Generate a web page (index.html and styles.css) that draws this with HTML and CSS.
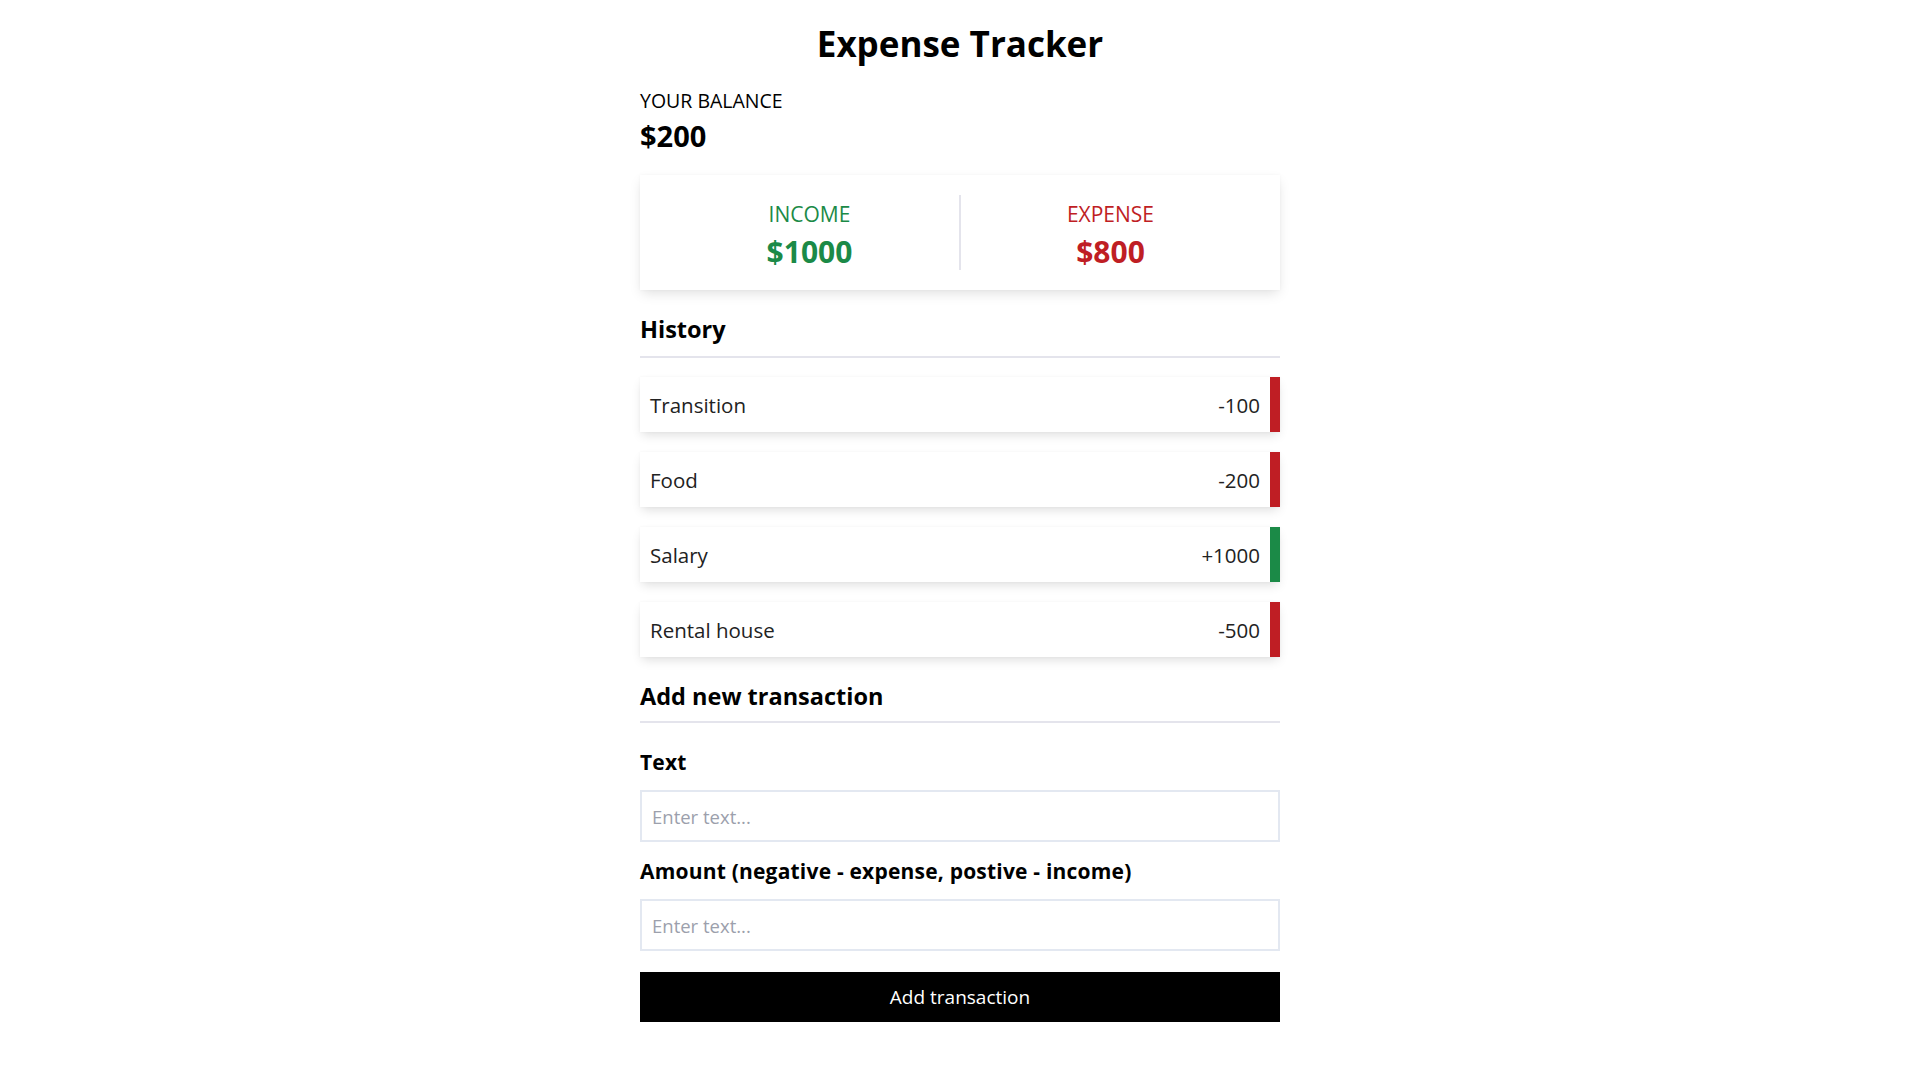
FILE: index.html
```html
<!DOCTYPE html>
<html lang="en">
<head>
<meta charset="utf-8">
<title>Expense Tracker</title>
<link rel="stylesheet" href="styles.css">
</head>
<body>
<div class="container">
  <h1 class="title">Expense Tracker</h1>
  <p class="balance-label">YOUR BALANCE</p>
  <p class="balance">$200</p>

  <div class="summary">
    <div class="summary-col">
      <p class="summary-label plus">INCOME</p>
      <p class="summary-value plus">$1000</p>
    </div>
    <div class="summary-col">
      <p class="summary-label minus">EXPENSE</p>
      <p class="summary-value minus">$800</p>
    </div>
  </div>

  <h3 class="section-title">History</h3>
  <ul class="list">
    <li class="item item-minus"><span>Transition</span><span>-100</span></li>
    <li class="item item-minus"><span>Food</span><span>-200</span></li>
    <li class="item item-plus"><span>Salary</span><span>+1000</span></li>
    <li class="item item-minus"><span>Rental house</span><span>-500</span></li>
  </ul>

  <h3 class="section-title section-add">Add new transaction</h3>
  <form class="form">
    <label class="field-label label-text" for="text">Text</label>
    <input class="field" id="text" type="text" placeholder="Enter text...">
    <label class="field-label label-amount" for="amount">Amount (negative - expense, postive - income)</label>
    <input class="field" id="amount" type="text" placeholder="Enter text...">
    <button class="btn" type="button">Add transaction</button>
  </form>
</div>
</body>
</html>
```
FILE: styles.css
```css
* { box-sizing: border-box; }

body {
  margin: 0;
  background: #fff;
  color: #000;
  font-family: "Open Sans", "Noto Sans", sans-serif;
}

.container {
  width: 640px;
  margin: 0 auto;
}

.title {
  margin: 22px 0 0;
  font-size: 35px;
  line-height: 44px;
  font-weight: 700;
  text-align: center;
}

.balance-label {
  margin: 23px 0 0;
  font-size: 19.5px;
  line-height: 24px;
  font-weight: 400;
}

.balance {
  margin: 6px 0 0;
  font-size: 29px;
  line-height: 34px;
  font-weight: 700;
}

.summary {
  margin-top: 22px;
  height: 115px;
  padding: 20px;
  display: flex;
  background: #fff;
  box-shadow: 0 5px 12px -2px rgba(0, 0, 0, 0.13), 0 0 3px rgba(0, 0, 0, 0.04);
}

.summary-col {
  flex: 1;
  text-align: center;
  padding-top: 7px;
}

.summary-col:first-child {
  border-right: 2px solid #e4e4ec;
}

.summary-label {
  margin: 0;
  font-size: 21px;
  line-height: 24px;
}

.summary-value {
  margin: 9px 0 0;
  font-size: 30px;
  line-height: 34px;
  font-weight: 700;
}

.plus { color: #1b8a47; }
.minus { color: #bf1e24; }

.section-title {
  margin: 25px 0 0;
  padding-bottom: 13px;
  font-size: 23.5px;
  line-height: 28px;
  font-weight: 700;
  border-bottom: 2px solid #e4e4ec;
}

.section-add {
  margin-top: 25px;
  padding-bottom: 11px;
}

.list {
  list-style: none;
  margin: 19px 0 0;
  padding: 0;
  display: flex;
  flex-direction: column;
  gap: 20px;
}

.item {
  height: 55px;
  display: flex;
  align-items: center;
  justify-content: space-between;
  padding: 0 10px 0 10px;
  background: #fff;
  font-size: 20.5px;
  color: #222;
  border-right: 10px solid;
  box-shadow: 0 5px 10px -2px rgba(0, 0, 0, 0.13), 0 0 3px rgba(0, 0, 0, 0.04);
}

.item-minus { border-right-color: #bf1e24; }
.item-plus { border-right-color: #1b8a47; }

.form {
  display: flex;
  flex-direction: column;
}

.field-label {
  font-size: 21px;
  line-height: 24px;
  font-weight: 700;
  letter-spacing: 0.2px;
}

.label-text { margin-top: 27px; }
.label-amount { margin-top: 17px; }

.field {
  margin-top: 16px;
  height: 52px;
  padding: 0 10px;
  border: 2px solid #e3e8f1;
  font-family: inherit;
  font-size: 18.5px;
  color: #000;
  outline: none;
}

.field::placeholder { color: #9ca0ac; }

.btn {
  margin-top: 21px;
  height: 50px;
  border: 0;
  background: #000;
  color: #fff;
  font-family: inherit;
  font-size: 19px;
  cursor: pointer;
}
```
